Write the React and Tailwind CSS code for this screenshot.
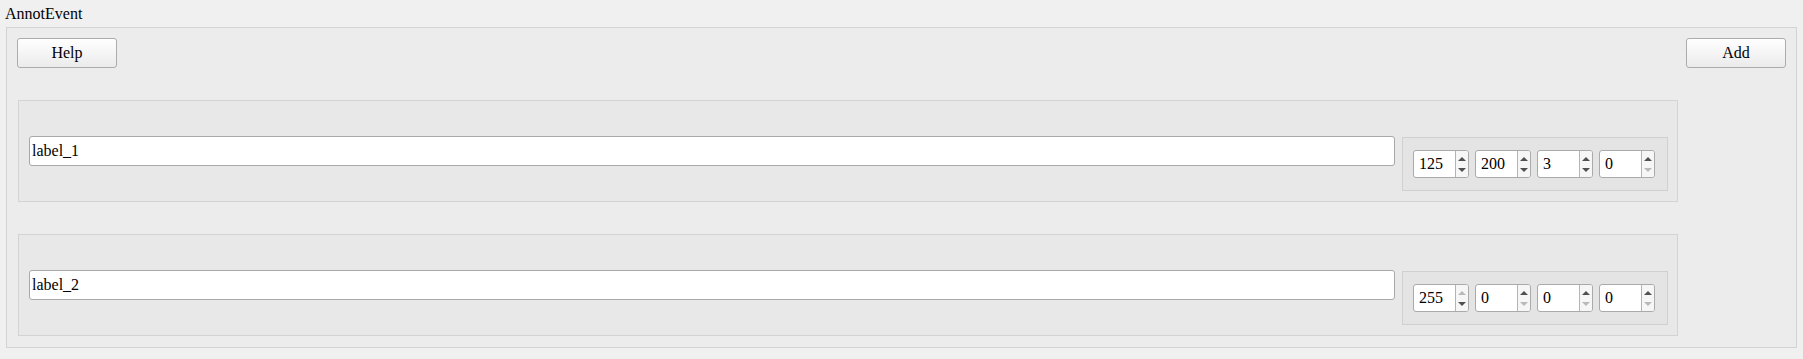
import React from 'react';

const serif = { fontFamily: '"Liberation Serif", "Times New Roman", serif' };

function Arrow({ dir, disabled }) {
  const color = disabled ? 'border-b-[#b9b9b9]' : 'border-b-[#505050]';
  const colorDown = disabled ? 'border-t-[#b9b9b9]' : 'border-t-[#505050]';
  if (dir === 'up') {
    return <div className={`h-0 w-0 border-l-[4px] border-r-[4px] border-b-[4px] border-l-transparent border-r-transparent ${color}`} />;
  }
  return <div className={`h-0 w-0 border-l-[4px] border-r-[4px] border-t-[4px] border-l-transparent border-r-transparent ${colorDown}`} />;
}

function Spinner({ value, upDisabled, downDisabled }) {
  return (
    <div className="flex h-[28px] w-[56px] overflow-hidden rounded-[3px] border border-[#aaaaaa] bg-white">
      <div className="flex flex-1 items-center pl-[5px] text-[16px] text-black">{value}</div>
      <div className="flex w-[13px] flex-col items-center justify-center gap-[7px] border-l border-[#b4b4b4] bg-[#f6f6f6]">
        <Arrow dir="up" disabled={upDisabled} />
        <Arrow dir="down" disabled={downDisabled} />
      </div>
    </div>
  );
}

function LabelRow({ label, spinners }) {
  return (
    <div className="ml-[11px] flex w-[1660px] items-start border border-[#d3d3d3] bg-[#e8e8e8] pt-[35px] pb-[10px] pl-[10px] pr-[9px]">
      <div className="flex h-[30px] flex-1 items-center rounded-[3px] border border-[#a9a9a9] bg-white pl-[2px] text-[16px] text-black">
        {label}
      </div>
      <div className="mt-[1px] ml-[7px] flex h-[54px] w-[266px] items-center gap-[6px] border border-[#d0d0d0] bg-[#e4e4e4] pl-[10px]">
        {spinners.map((s, i) => (
          <Spinner key={i} value={s.value} upDisabled={s.up} downDisabled={s.down} />
        ))}
      </div>
    </div>
  );
}

function Button({ children }) {
  return (
    <button className="flex h-[30px] w-[100px] items-center justify-center rounded-[3px] border border-[#acacac] bg-gradient-to-b from-[#ffffff] to-[#ebebeb] text-[16px] text-black">
      {children}
    </button>
  );
}

export default function App() {
  const rows = [
    {
      label: 'label_1',
      spinners: [
        { value: '125' },
        { value: '200' },
        { value: '3' },
        { value: '0', down: true },
      ],
    },
    {
      label: 'label_2',
      spinners: [
        { value: '255', up: true },
        { value: '0', down: true },
        { value: '0', down: true },
        { value: '0', down: true },
      ],
    },
  ];

  return (
    <div className="h-[359px] w-[1803px] bg-[#f0f0f0] text-black" style={serif}>
      <div className="flex h-[27px] items-center pl-[5px] pt-[1px] text-[16px]">AnnotEvent</div>
      <div className="ml-[6px] flex w-[1791px] flex-col border border-[#d3d3d3] bg-[#ececec] pt-[10px] pb-[11px]">
        <div className="flex justify-between pl-[10px] pr-[10px]">
          <Button>Help</Button>
          <Button>Add</Button>
        </div>
        <div className="mt-[32px] flex flex-col gap-[32px]">
          {rows.map((r) => (
            <LabelRow key={r.label} label={r.label} spinners={r.spinners} />
          ))}
        </div>
      </div>
    </div>
  );
}
